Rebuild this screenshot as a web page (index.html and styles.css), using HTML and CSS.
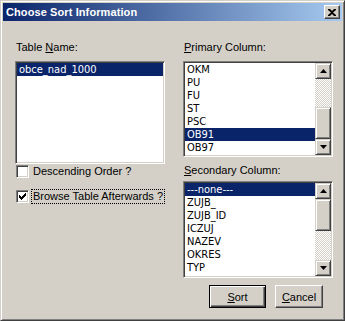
FILE: index.html
```html
<!DOCTYPE html>
<html lang="en">
<head>
    <meta charset="UTF-8">
    <title>Choose Sort Information</title>
    <link rel="stylesheet" href="styles.css">
</head>
<body>
    <div class="window">
        <div class="titlebar">
            <span class="title">Choose Sort Information</span>
            <button class="close" aria-label="Close">
                <svg width="8" height="7" viewBox="0 0 8 7"><path d="M0 0h2l2 2 2-2h2v1L5 3.5 8 6v1H6L4 5 2 7H0V6l3-2.5L0 1z" fill="#000"/></svg>
            </button>
        </div>

        <div class="content">
            <div class="col">
                <div class="field-label">Table <u>N</u>ame:</div>
                <div class="listbox table-list">
                    <div class="items">
                        <div class="item selected">obce_nad_1000</div>
                    </div>
                </div>
                <label class="check first">
                    <span class="box"></span>
                    <span class="text">Descending Order ?</span>
                </label>
                <label class="check second">
                    <span class="box">
                        <svg width="7" height="7" viewBox="0 0 7 7"><path d="M0 2h1v1h1v1h1V3h1V2h1V1h1V0h1v3H6v1H5v1H4v1H3v1H2V6H1V5H0z" fill="#000"/></svg>
                    </span>
                    <span class="text focus">Browse Table Afterwards ?</span>
                </label>
            </div>

            <div class="col">
                <div class="field-label"><u>P</u>rimary Column:</div>
                <div class="listbox primary">
                    <div class="items">
                        <div class="item">OKM</div>
                        <div class="item">PU</div>
                        <div class="item">FU</div>
                        <div class="item">ST</div>
                        <div class="item">PSC</div>
                        <div class="item selected">OB91</div>
                        <div class="item">OB97</div>
                    </div>
                    <div class="scrollbar">
                        <div class="arrow up"><svg width="7" height="4" viewBox="0 0 7 4"><path d="M3.5 0L7 4H0z" fill="#000"/></svg></div>
                        <div class="track"></div>
                        <div class="thumb"></div>
                        <div class="arrow down"><svg width="7" height="4" viewBox="0 0 7 4"><path d="M0 0h7L3.5 4z" fill="#000"/></svg></div>
                    </div>
                </div>

                <div class="field-label second-label"><u>S</u>econdary Column:</div>
                <div class="listbox secondary">
                    <div class="items">
                        <div class="item selected">---none---</div>
                        <div class="item">ZUJB_</div>
                        <div class="item">ZUJB_ID</div>
                        <div class="item">ICZUJ</div>
                        <div class="item">NAZEV</div>
                        <div class="item">OKRES</div>
                        <div class="item">TYP</div>
                        <div class="item">OKM</div>
                    </div>
                    <div class="scrollbar">
                        <div class="arrow up"><svg width="7" height="4" viewBox="0 0 7 4"><path d="M3.5 0L7 4H0z" fill="#000"/></svg></div>
                        <div class="thumb"></div>
                        <div class="track"></div>
                        <div class="arrow down"><svg width="7" height="4" viewBox="0 0 7 4"><path d="M0 0h7L3.5 4z" fill="#000"/></svg></div>
                    </div>
                </div>

                <div class="buttons">
                    <button class="btn default"><u>S</u>ort</button>
                    <button class="btn"><u>C</u>ancel</button>
                </div>
            </div>
        </div>
    </div>
</body>
</html>
```

FILE: styles.css
```css
:root {
    --face: #d4d0c8;
    --light: #ffffff;
    --shadow: #808080;
    --dark: #404040;
    --select: #0a246a;
}

* {
    box-sizing: border-box;
    margin: 0;
    padding: 0;
}

body {
    background: var(--face);
    font-family: "Liberation Sans", Arial, sans-serif;
    font-size: 11px;
    color: #000;
}

.window {
    width: 345px;
    height: 321px;
    padding: 2px;
    background: var(--face);
    border: 1px solid;
    border-color: var(--face) var(--dark) var(--dark) var(--face);
    box-shadow: inset 1px 1px var(--light), inset -1px -1px var(--shadow);
}

/* title bar */
.titlebar {
    height: 18px;
    display: flex;
    align-items: center;
    justify-content: space-between;
    padding: 0 2px 0 3px;
    background: linear-gradient(to right, #0a246a, #a6caf0);
}

.title {
    color: #fff;
    font-weight: bold;
    font-size: 11px;
    letter-spacing: 0.1px;
    line-height: 18px;
}

.close {
    width: 16px;
    height: 14px;
    display: flex;
    align-items: center;
    justify-content: center;
    background: var(--face);
    border: 1px solid;
    border-color: var(--light) var(--dark) var(--dark) var(--light);
    box-shadow: inset -1px -1px var(--shadow);
}

/* body */
.content {
    display: grid;
    grid-template-columns: 150px 150px;
    column-gap: 18px;
    padding: 20px 0 0 12px;
}

.col {
    display: flex;
    flex-direction: column;
}

.field-label {
    line-height: 13px;
    padding-left: 1px;
}

.second-label {
    margin-top: 7px;
}

/* list boxes */
.listbox {
    margin-top: 7px;
    display: flex;
    background: #fff;
    border: 1px solid;
    border-color: var(--shadow) var(--light) var(--light) var(--shadow);
    box-shadow: inset 1px 1px var(--dark), inset -1px -1px var(--face);
    padding: 1px;
    overflow: hidden;
}

.table-list {
    height: 103px;
}

.primary {
    height: 96px;
}

.secondary {
    height: 97px;
    margin-top: 4px;
}

.items {
    flex: 1;
    overflow: hidden;
}

.item {
    height: 13px;
    line-height: 13px;
    padding-left: 2px;
    font-family: "DejaVu Sans Condensed", "Liberation Sans Narrow", "Liberation Sans", sans-serif;
    font-stretch: condensed;
    font-size: 11px;
    white-space: nowrap;
}

.selected {
    background: var(--select);
    color: #fff;
}

/* scroll bars */
.scrollbar {
    width: 16px;
    display: flex;
    flex-direction: column;
}

.arrow,
.thumb {
    background: var(--face);
    border: 1px solid;
    border-color: var(--face) var(--dark) var(--dark) var(--face);
    box-shadow: inset 1px 1px var(--light), inset -1px -1px var(--shadow);
}

.arrow {
    height: 16px;
    display: flex;
    align-items: center;
    justify-content: center;
}

.thumb {
    height: 32px;
}

.track {
    flex: 1;
    background: repeating-conic-gradient(var(--face) 0 25%, #fff 0 50%) 0 0 / 2px 2px;
}

/* check boxes */
.check {
    display: flex;
    align-items: center;
    gap: 4px;
    padding-left: 1px;
    line-height: 13px;
}

.check.first {
    margin-top: 1px;
}

.check.second {
    margin-top: 12px;
}

.box {
    width: 13px;
    height: 13px;
    display: flex;
    align-items: center;
    justify-content: center;
    background: #fff;
    border: 1px solid;
    border-color: var(--shadow) var(--light) var(--light) var(--shadow);
    box-shadow: inset 1px 1px var(--dark), inset -1px -1px var(--face);
}

.focus {
    outline: 1px dotted #000;
    outline-offset: 0;
    padding: 0 1px;
    margin-left: -1px;
}

/* buttons */
.buttons {
    display: flex;
    justify-content: flex-end;
    gap: 9px;
    margin-top: 7px;
    padding-right: 10px;
}

.btn {
    height: 23px;
    font-family: inherit;
    font-size: 11px;
    background: var(--face);
    border: 1px solid;
    border-color: var(--light) var(--dark) var(--dark) var(--light);
    box-shadow: inset -1px -1px var(--shadow);
    padding: 0;
    width: 48px;
}

.btn.default {
    width: 57px;
    border-color: #000;
    box-shadow: inset 1px 1px var(--light), inset -1px -1px var(--dark), inset -2px -2px var(--shadow);
}
```
